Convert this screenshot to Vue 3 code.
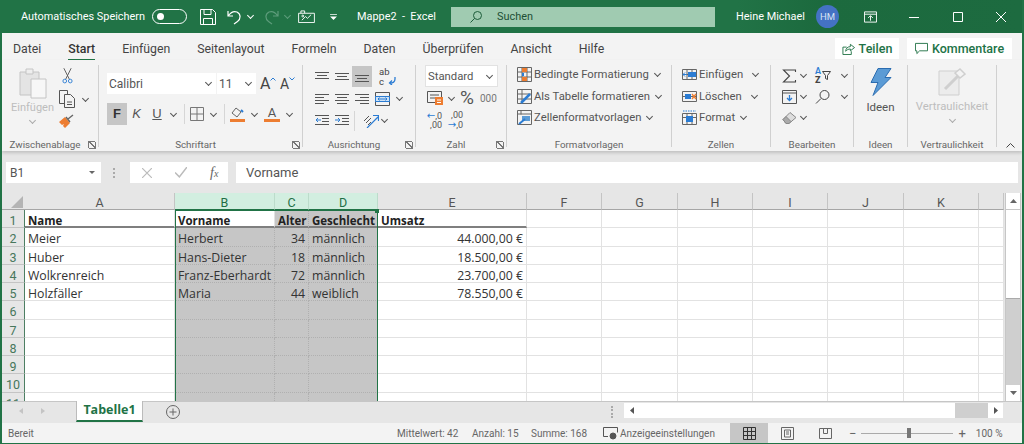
<script setup>
const tabs = ['Datei', 'Start', 'Einfügen', 'Seitenlayout', 'Formeln', 'Daten', 'Überprüfen', 'Ansicht', 'Hilfe']
const columns = ['A', 'B', 'C', 'D', 'E', 'F', 'G', 'H', 'I', 'J', 'K', '']
const selected = ['B', 'C', 'D']

const data = [
  ['Name', 'Vorname', 'Alter', 'Geschlecht', 'Umsatz'],
  ['Meier', 'Herbert', '34', 'männlich', '44.000,00 €'],
  ['Huber', 'Hans-Dieter', '18', 'männlich', '18.500,00 €'],
  ['Wolkrenreich', 'Franz-Eberhardt', '72', 'männlich', '23.700,00 €'],
  ['Holzfäller', 'Maria', '44', 'weiblich', '78.550,00 €'],
]
const rowNumbers = Array.from({ length: 11 }, (_, i) => i + 1)

function cellText(row, col) {
  return data[row - 1]?.[col] ?? ''
}

function cellClass(row, col) {
  const name = columns[col]
  return {
    'cell--sel': selected.includes(name) && !(row === 1 && name === 'B'),
    'cell--head': row === 1,
    'cell--line': row === 1 && col < 5,
    'cell--right': row > 1 && (name === 'C' || name === 'E'),
  }
}
</script>

<template>
  <div class="xl">
    <!-- Title bar -->
    <header class="title">
      <span class="title__auto">Automatisches Speichern</span>
      <span class="toggle"><i></i></span>
      <svg class="qa qa--save" viewBox="0 0 16 16" fill="none" stroke="#fff"><path d="M.5.500h12l3 3v12H.5zM4 .5v5h7v-5M3.500 15.500v-6h9v6" /></svg>
      <svg class="qa qa--undo" viewBox="0 0 16 16" fill="none" stroke="#fff" stroke-width="1.2"><path d="M1 2v5h5M1.500 6.500C4 3 7 1.800 10 3c4 2 4 7 .5 9.500L7 15" /></svg>
      <i class="chev chev--w"></i>
      <svg class="qa qa--redo" viewBox="0 0 16 16" fill="none" stroke="#5d9c7b" stroke-width="1.2"><path d="M15 2v5h-5M14.500 6.500C12 3 9 1.800 6 3c-4 2-4 7-.5 9.500L9 15" /></svg>
      <i class="chev chev--dim"></i>
      <svg class="qa qa--photo" viewBox="0 0 18 14" fill="none" stroke="#fff"><path d="M.5 3.500h17v10H.5zM3 3.500V1h4v2.500M4 11l4-4 2 2 4-4" /><circle cx="5" cy="6.500" r="1" /></svg>
      <svg class="qa qa--more" viewBox="0 0 8 7" fill="#fff"><path d="M0 0h8v1H0zM0 3h8L4 7z" /></svg>
      <span class="title__doc">Mappe2 &nbsp;-&nbsp; Excel</span>
      <div class="search">
        <svg viewBox="0 0 12 12" fill="none" stroke="#1d5c3a" stroke-width="1"><circle cx="7.500" cy="4.500" r="4" /><path d="M4.500 7.500L.5 11.500" /></svg>
        <span>Suchen</span>
      </div>
      <span class="title__user">Heine Michael</span>
      <span class="avatar">HM</span>
      <svg class="win win--display" viewBox="0 0 14 12" fill="none" stroke="#fff"><path d="M.5.500h13v11H.5zM.5 3h13M7 10V5M4.500 7L7 4.500 9.500 7" /></svg>
      <svg class="win win--min" viewBox="0 0 10 10" stroke="#fff"><path d="M0 5.500h10" /></svg>
      <svg class="win win--max" viewBox="0 0 10 10" fill="none" stroke="#fff"><path d="M.5.500h9v9h-9z" /></svg>
      <svg class="win win--close" viewBox="0 0 10 10" stroke="#fff"><path d="M0 0l10 10M10 0L0 10" /></svg>
    </header>

    <!-- Tabs -->
    <nav class="tabs">
      <span v-for="t in tabs" :key="t" class="tab" :class="{ 'tab--on': t === 'Start' }">{{ t }}</span>
      <span class="tabs__gap"></span>
      <button class="pill pill--share">
        <svg viewBox="0 0 14 14" fill="none" stroke="#217346"><path d="M5 5.500H1v8h9V10M4 10c0-3 2-5 5-5V2.500L13.500 6 9 9.500V7.500c-2 0-4 1-5 2.500z" /></svg>
        Teilen
      </button>
      <button class="pill pill--comment">
        <svg viewBox="0 0 14 14" fill="none" stroke="#217346"><path d="M.5 1.500h13v8H5l-3 3v-3H.5z" /></svg>
        Kommentare
      </button>
    </nav>

    <!-- Ribbon -->
    <section class="ribbon">
      <div class="group g-clip">
        <div class="group__body clip">
          <div class="clip__big">
            <svg viewBox="0 0 28 31" fill="none" stroke="#c4c4c4"><path fill="#e4e4e4" d="M1 4h19v23H1z" /><path fill="#eee" d="M7 1h7v5H7z" /><path fill="#f7f7f7" d="M12 11h15v19H12z" /></svg>
            <span>Einfügen</span>
            <i class="chev chev--off"></i>
          </div>
          <div class="clip__small">
            <svg class="ic-cut" viewBox="0 0 12 17" fill="none" stroke="#555"><path d="M2 0l6 12M10 0L4 12" /><circle cx="3" cy="14" r="2" stroke="#2b7cd3" /><circle cx="9" cy="14" r="2" stroke="#2b7cd3" /></svg>
            <div class="clip__copy">
              <svg viewBox="0 0 16 18" fill="none" stroke="#555"><path d="M.5.500h8v13h-8z" /><path fill="#f3f3f3" d="M5.500 4.500h6l4 4v9h-10z" /><path d="M8 12h5M8 14.500h5" /></svg>
              <i class="chev"></i>
            </div>
            <svg class="ic-brush" viewBox="0 0 16 14" fill="#ed7d31"><path d="M0 8l6-5 5 6-5 5-2-2 1-2-2 1z" /><path fill="none" stroke="#666" stroke-width="1.400" d="M9 5l5-4M7 3l4 5" /></svg>
          </div>
        </div>
        <div class="group__label"><span>Zwischenablage</span><i class="launch"></i></div>
      </div>

      <div class="group g-font">
        <div class="group__body font">
          <div class="font__top">
            <span class="combo combo--font">Calibri<i class="chev"></i></span>
            <span class="combo combo--size">11<i class="chev"></i></span>
            <span class="grow">A<svg viewBox="0 0 6 4" fill="none" stroke="#2b7cd3"><path d="M.5 3.500L3 1l2.500 2.500" /></svg></span>
            <span class="grow grow--down">A<svg viewBox="0 0 6 4" fill="none" stroke="#2b7cd3"><path d="M.5.500L3 3l2.500-2.500" /></svg></span>
          </div>
          <div class="font__tools">
            <b class="ftool ftool--on">F</b>
            <em class="ftool">K</em>
            <u class="ftool">U</u>
            <i class="chev"></i>
            <span class="vsep"></span>
            <svg viewBox="0 0 14 14" fill="none" stroke="#777"><path d="M.5.500h13v13H.5zM7 .5v13M.5 7h13" /></svg>
            <i class="chev"></i>
            <span class="vsep"></span>
            <span></span>
            <span class="swatch">
              <svg viewBox="0 0 15 11" fill="none" stroke="#666"><path d="M2 6l4-5 5 4-4 5z" /><path d="M11 3l2 2" stroke="#2b7cd3" stroke-width="2" /></svg>
              <i></i>
            </span>
            <i class="chev"></i>
            <span class="swatch swatch--text">A<i></i></span>
            <i class="chev"></i>
          </div>
        </div>
        <div class="group__label"><span>Schriftart</span><i class="launch"></i></div>
      </div>

      <div class="group g-align">
        <div class="group__body align">
          <div class="align__row">
            <span class="tool"><svg viewBox="0 0 14 12" stroke="#555"><path d="M0 1.500h14M2 4.500h10M0 7.500h14" /></svg></span>
            <span class="tool"><svg viewBox="0 0 14 12" stroke="#555"><path d="M0 2.500h14M2 5.500h10M0 8.500h14" /></svg></span>
            <span class="tool tool--on"><svg viewBox="0 0 14 12" stroke="#555"><path d="M0 4.500h14M2 7.500h10M0 10.500h14" /></svg></span>
            <span class="tool tool--abc"><span>ab<br />c</span><svg viewBox="0 0 8 8" fill="none" stroke="#2b7cd3" stroke-width="1.300"><path d="M7 0v2c0 3-2 4-5 4M4 3.500L1.500 6 4 8" /></svg></span>
          </div>
          <div class="align__row">
            <span class="tool"><svg viewBox="0 0 14 12" stroke="#555"><path d="M0 1.500h14M0 4.500h9M0 7.500h14M0 10.500h9" /></svg></span>
            <span class="tool"><svg viewBox="0 0 14 12" stroke="#555"><path d="M0 1.500h14M2 4.500h10M0 7.500h14M2 10.500h10" /></svg></span>
            <span class="tool"><svg viewBox="0 0 14 12" stroke="#555"><path d="M0 1.500h14M5 4.500h9M0 7.500h14M5 10.500h9" /></svg></span>
            <span class="tool"><svg class="ic-merge" viewBox="0 0 15 14" fill="none" stroke="#555"><path d="M.5.500h14v13H.5z" /><path fill="#cfe2f5" stroke="#2b7cd3" d="M.5 4.500h14v5H.5z" /><path stroke="#2b7cd3" d="M3 7h9M4.500 5.500L3 7l1.500 1.500M10.500 5.500L12 7l-1.500 1.500" /></svg></span>
            <i class="chev"></i>
          </div>
          <div class="align__row">
            <span class="tool"><svg viewBox="0 0 14 12" fill="none" stroke="#555"><path d="M0 .5h14M7 3.500h7M7 6.500h7M0 9.500h14" /><path stroke="#2b7cd3" d="M6 5H1M3 3L1 5l2 2" /></svg></span>
            <span class="tool"><svg viewBox="0 0 14 12" fill="none" stroke="#555"><path d="M0 .5h14M7 3.500h7M7 6.500h7M0 9.500h14" /><path stroke="#2b7cd3" d="M0 5h5M3 3l2 2-2 2" /></svg></span>
            <span class="vsep"></span>
            <span class="tool"><svg class="ic-orient" viewBox="0 0 16 15" fill="none" stroke="#555"><path d="M1 8l5-5M3 10l5-5M5 12l3-3" /><path stroke="#2b7cd3" stroke-width="1.200" d="M4 15L15 4M10 2.500h5.500V8" /></svg></span>
            <i class="chev"></i>
          </div>
        </div>
        <div class="group__label"><span>Ausrichtung</span><i class="launch"></i></div>
      </div>

      <div class="group g-num">
        <div class="group__body num">
          <span class="combo combo--num">Standard<i class="chev"></i></span>
          <div class="num__row">
            <svg class="ic-money" viewBox="0 0 16 15" fill="none" stroke="#555"><path d="M.5.500h14v11H.5zM3 4h9M3 7h5" /><path fill="#ed7d31" stroke="none" d="M8 6h8v8H8z" /><path stroke="#fff" d="M10 9h4M10 11.500h4" /></svg>
            <i class="chev"></i>
            <span class="num__pct">%</span>
            <span class="num__000">000</span>
          </div>
          <div class="num__row num__row--dec">
            <span class="dec"><span><b>←</b>,0</span><span>,00</span></span>
            <span class="dec"><span>,00</span><span><b>→</b>,0</span></span>
          </div>
        </div>
        <div class="group__label"><span>Zahl</span><i class="launch"></i></div>
      </div>

      <div class="group g-style">
        <div class="group__body list">
          <div class="list__item">
            <svg viewBox="0 0 15 15" fill="none" stroke="#666"><path d="M.5.500h14v14H.5zM5 .5v14M10 .5v14M.5 5h14M.5 10h14" /><path fill="#ed7d31" stroke="none" d="M5 1h5v4H5zM5 10h5v4H5z" /><path fill="#2b7cd3" stroke="none" d="M5 6h2v3H5z" /></svg>
            <span>Bedingte Formatierung</span><i class="chev"></i>
          </div>
          <div class="list__item">
            <svg viewBox="0 0 15 15" fill="none" stroke="#666"><path d="M.5.500h14v14H.5zM.5 5h14M.5 10h14M5 .5v14" /><path stroke="#2b7cd3" stroke-width="2.500" d="M4 14l9-9" /></svg>
            <span>Als Tabelle formatieren</span><i class="chev"></i>
          </div>
          <div class="list__item">
            <svg viewBox="0 0 15 15" fill="none" stroke="#666"><path d="M.5.500h14v14H.5zM.5 4h14M4 .5v4" /><path fill="#5b9bd5" stroke="none" d="M5 6h8v5H5z" /><path stroke="#2b7cd3" stroke-width="2" d="M2 14l6-5" /></svg>
            <span>Zellenformatvorlagen</span><i class="chev"></i>
          </div>
        </div>
        <div class="group__label"><span>Formatvorlagen</span></div>
      </div>

      <div class="group g-cells">
        <div class="group__body list">
          <div class="list__item list__item--ins">
            <svg viewBox="0 0 15 15" fill="none" stroke="#666"><path d="M.5 2.500h14v10H.5zM5 2.500v10M10 2.500v10M.5 7.500h14" /><path fill="#2b7cd3" stroke="none" d="M6 5h8v5H6z" /><path stroke="#2b7cd3" d="M5 7.500H1M3 5.500l-2 2 2 2" /></svg>
            <span>Einfügen</span><i class="chev"></i>
          </div>
          <div class="list__item list__item--del">
            <svg viewBox="0 0 15 15" fill="none" stroke="#666"><path d="M.5 2.500h14v10H.5zM.5 7.500h14" /><path fill="#2b7cd3" stroke="none" d="M3 5h6v5H3z" /><path stroke="#ed7d31" stroke-width="1.300" d="M10 5l4 5M14 5l-4 5" /></svg>
            <span>Löschen</span><i class="chev"></i>
          </div>
          <div class="list__item list__item--fmt">
            <svg viewBox="0 0 15 15" fill="none" stroke="#666"><path d="M.5 3.500h14v11H.5zM5 3.500v11M10 3.500v11M.5 7.500h14" /><path fill="#2b7cd3" stroke="none" d="M4 6h7v6H4z" /><path stroke="#2b7cd3" stroke-dasharray="1.500 1" d="M1 1h13" /></svg>
            <span>Format</span><i class="chev"></i>
          </div>
        </div>
        <div class="group__label"><span>Zellen</span></div>
      </div>

      <div class="group g-edit">
        <div class="group__body edit">
          <svg viewBox="0 0 14 14" fill="none" stroke="#444" stroke-width="1.100"><path d="M13 3V1H1l6 6-6 6h12v-2" /></svg>
          <i class="chev"></i>
          <span class="edit__sort">
            <span>A<br /><b>Z</b></span>
            <svg viewBox="0 0 9 9" fill="none" stroke="#444"><path d="M.5.500h8L5.500 4.500v4l-2-1v-3z" /></svg>
          </span>
          <i class="chev"></i>
          <svg viewBox="0 0 15 14" fill="none" stroke="#555"><path d="M.5.500h14v13H.5zM.5 3h14" /><path stroke="#2b7cd3" stroke-width="1.300" d="M7.500 5v5M5 8l2.500 2.500L10 8" /></svg>
          <i class="chev"></i>
          <svg viewBox="0 0 14 14" fill="none" stroke="#444"><circle cx="9" cy="5" r="4.500" /><path d="M5.500 8.500L.5 13.500" /></svg>
          <i class="chev"></i>
          <svg viewBox="0 0 15 13" fill="#ddd" stroke="#888"><path d="M1 8l7-7 6 5-7 6H4z" /><path fill="#aaa" d="M1 8l3-3 5 5-2 2H4z" /></svg>
          <i class="chev"></i>
        </div>
        <div class="group__label"><span>Bearbeiten</span></div>
      </div>

      <div class="group g-ideas">
        <div class="group__body big">
          <svg viewBox="0 0 22 28" fill="#5b9bd5" stroke="#2b6cb0" stroke-linejoin="round"><path d="M8 .5h13l-6 9h6L3 27.500l5-13H1z" /></svg>
          <span>Ideen</span>
        </div>
        <div class="group__label"><span>Ideen</span></div>
      </div>

      <div class="group g-conf">
        <div class="group__body big big--off">
          <svg viewBox="0 0 28 28" fill="none" stroke="#cfcfcf"><path fill="#ececec" d="M1 3h20v24H1z" /><path stroke-width="3" d="M7 21L20 8" /><path fill="#f3f3f3" stroke-width="1.500" d="M17 5l5-4 5 5-5 4z" /></svg>
          <span>Vertraulichkeit</span>
          <i class="chev chev--off"></i>
        </div>
        <div class="group__label"><span>Vertraulichkeit</span></div>
      </div>

      <svg class="collapse" viewBox="0 0 9 5" fill="none" stroke="#444"><path d="M.5 4.500l4-4 4 4" /></svg>
    </section>

    <!-- Formula bar -->
    <section class="formula">
      <div class="namebox"><span>B1</span><svg viewBox="0 0 6 3" fill="#666"><path d="M0 0h6L3 3z" /></svg></div>
      <span class="grip"></span>
      <div class="fxbox">
        <svg viewBox="0 0 10 10" stroke="#bbb" stroke-width="1.200"><path d="M0 0l10 10M10 0L0 10" /></svg>
        <svg viewBox="0 0 11 10" fill="none" stroke="#bbb" stroke-width="1.400"><path d="M0 5l4 4 7-9" /></svg>
        <em>f<small>x</small></em>
      </div>
      <div class="input">Vorname</div>
    </section>

    <!-- Sheet -->
    <section class="sheet">
      <div class="grid">
        <div class="corner"><svg viewBox="0 0 12 12" fill="#b4b4b4"><path d="M12 0v12H0z" /></svg></div>
        <div v-for="c in columns" :key="c" class="colhead" :class="{ 'colhead--sel': selected.includes(c) }">{{ c }}</div>
        <template v-for="r in rowNumbers" :key="r">
          <div class="rowhead">{{ r }}</div>
          <div v-for="(c, i) in columns" :key="c" class="cell" :class="cellClass(r, i)">{{ cellText(r, i) }}</div>
        </template>
        <div class="selection"><i></i></div>
      </div>
      <div class="vscroll">
        <span class="sbtn"><svg viewBox="0 0 7 4" fill="#666"><path d="M3.500 0L7 4H0z" /></svg></span>
        <span class="vscroll__thumb"></span>
        <span class="vscroll__track"></span>
        <span class="sbtn"><svg viewBox="0 0 7 4" fill="#666"><path d="M0 0h7L3.500 4z" /></svg></span>
      </div>
    </section>

    <!-- Sheet tabs -->
    <section class="sheets">
      <svg class="nav" viewBox="0 0 4 6" fill="#c4c4c4"><path d="M4 0v6L0 3z" /></svg>
      <svg class="nav" viewBox="0 0 4 6" fill="#c4c4c4"><path d="M0 0v6l4-3z" /></svg>
      <span class="sheet-tab">Tabelle1</span>
      <svg class="plus" viewBox="0 0 14 14" fill="none" stroke="#666"><circle cx="7" cy="7" r="6.500" /><path d="M3.500 7h7M7 3.500v7" /></svg>
      <span class="grip grip--sheets"></span>
      <div class="hscroll">
        <span class="hbtn"><svg viewBox="0 0 4 7" fill="#555"><path d="M4 0v7L0 3.500z" /></svg></span>
        <span class="hscroll__thumb"></span>
        <span class="hscroll__track"></span>
        <span class="hbtn"><svg viewBox="0 0 4 7" fill="#555"><path d="M0 0v7l4-3.500z" /></svg></span>
      </div>
    </section>

    <!-- Status bar -->
    <footer class="status">
      <span class="status__ready">Bereit</span>
      <span class="status__stat">Mittelwert: 42</span>
      <span class="status__stat">Anzahl: 15</span>
      <span class="status__stat">Summe: 168</span>
      <span class="status__disp">
        <svg viewBox="0 0 15 13" fill="none" stroke="#555"><path d="M5 9.500H.5v-9h14v5" /><circle cx="10" cy="9" r="3" fill="#555" /></svg>
        Anzeigeeinstellungen
      </span>
      <span class="view view--on"><svg viewBox="0 0 13 13" fill="none" stroke="#333"><path d="M.5.500h12v12H.5zM4.500.5v12M8.500.5v12M.5 4.500h12M.5 8.500h12" /></svg></span>
      <span class="view"><svg viewBox="0 0 13 13" fill="none" stroke="#666"><path d="M.5.500h12v12H.5zM3.500 3h6v7h-6zM5 5h3M5 7h3" /></svg></span>
      <span class="view"><svg viewBox="0 0 13 11" fill="none" stroke="#666"><path d="M.5.500h12v10H.5zM4.500.5v5h4v-5" /></svg></span>
      <span class="zoom">
        <span>−</span>
        <span class="zoom__bar"><i></i></span>
        <span>+</span>
      </span>
      <span class="status__pct">100 %</span>
    </footer>
  </div>
</template>

<style>
html, body { margin: 0; background: #217346; }
</style>

<style scoped>
.xl {
  width: 1024px; height: 444px; box-sizing: border-box; overflow: hidden;
  border: solid #217346; border-width: 0 2px 1px 2px;
  display: flex; flex-direction: column;
  background: #e6e6e6; color: #444;
  font-family: Roboto, "Liberation Sans", sans-serif;
}
svg { display: block; flex-shrink: 0; }
i { font-style: normal; }

/* Chevrons */
.chev {
  display: block; width: 4px; height: 4px; margin: 0 auto;
  border: solid #555; border-width: 0 1px 1px 0;
  transform: translateY(-1px) rotate(45deg);
}
.chev--off { border-color: #aaa; }
.chev--w { border-color: #fff; margin: 0 0 0 5px; }
.chev--dim { border-color: #5d9c7b; margin: 0 0 0 6px; }

/* Title bar */
.title {
  height: 33px; flex-shrink: 0; margin: 0 -2px;
  display: flex; align-items: center;
  background: linear-gradient(90deg, #217346 0, #217346 72%, #1c6a3e 80%, #1d6b40 100%);
  color: #fff; font-size: 10.900px;
}
.title__auto { margin-left: 21px; width: 131px; white-space: nowrap; }
.toggle {
  width: 35px; height: 15px; box-sizing: border-box; border: 1px solid #fff; border-radius: 8px;
  display: flex; align-items: center; padding-left: 4px;
}
.toggle i { width: 7px; height: 7px; border-radius: 50%; background: #fff; }
.qa--save { width: 16px; height: 16px; margin-left: 13px; }
.qa--undo { width: 16px; height: 16px; margin-left: 11px; }
.qa--redo { width: 16px; height: 16px; margin-left: 10px; }
.qa--photo { width: 17px; height: 13px; margin-left: 8px; }
.qa--more { width: 7px; height: 6px; margin-left: 15px; }
.title__doc { margin-left: 20px; width: 94px; white-space: nowrap; }
.search {
  width: 264px; height: 20px; display: flex; align-items: center;
  background: #a0cbb1; color: #1e4f35;
}
.search svg { width: 12px; height: 12px; margin-left: 19px; }
.search span { margin-left: 15px; }
.title__user { margin-left: 21px; width: 80px; white-space: nowrap; }
.avatar {
  width: 23px; height: 23px; border-radius: 50%; background: #4472c4;
  display: flex; align-items: center; justify-content: center; font-size: 9.500px; color: #d8e2f3;
}
.win--display { width: 13px; height: 12px; margin-left: 25px; }
.win--min { width: 10px; height: 10px; margin-left: 32px; }
.win--max { width: 10px; height: 10px; margin-left: 34px; }
.win--close { width: 10px; height: 10px; margin-left: 33px; }

/* Tabs */
.tabs {
  height: 27px; flex-shrink: 0; display: flex; align-items: center; gap: 27px;
  background: #f3f3f3; padding: 0 11px; font-size: 12.300px;
}
.tab { position: relative; line-height: 24px; margin-top: 4px; white-space: nowrap; }
.tab--on { font-weight: 500; color: #333; }
.tab--on::after {
  content: ""; position: absolute; left: 0; right: 0; bottom: 0; height: 2px; background: #217346;
}
.tabs__gap { flex: 1; margin-right: -27px; }
.pill {
  height: 21px; margin-top: 4px; padding: 0; border: none; background: #fff;
  display: flex; align-items: center; justify-content: center; gap: 4px;
  font: 500 12.500px Roboto, sans-serif; color: #217346;
}
.pill svg { width: 13px; height: 13px; }
.pill--share { width: 64px; margin-right: -19px; }
.pill--comment { width: 105px; margin-right: -1px; }

/* Ribbon */
.ribbon {
  height: 91px; flex-shrink: 0; display: flex; align-items: flex-start;
  background: #f3f3f3; padding-top: 5px; box-sizing: border-box;
  box-shadow: 0 2px 3px rgba(0, 0, 0, .16); position: relative; font-size: 11.500px;
}
.group {
  height: 82px; box-sizing: border-box; border-right: 1px solid #d0d0d0;
  display: flex; flex-direction: column;
}
.group__body { flex: 1; min-height: 0; }
.group__label {
  height: 12px; display: flex; align-items: center; font-size: 9.800px; color: #666;
  margin-bottom: -3px; white-space: nowrap;
}
.group__label span { flex: 1; text-align: center; }
.launch {
  width: 7px; height: 7px; margin-right: 3px; box-sizing: border-box;
  border: solid #777; border-width: 1px 0 0 1px; position: relative;
  background: linear-gradient(45deg, transparent 46%, #777 46%, #777 60%, transparent 60%);
  box-shadow: 1px 1px 0 #777;
}
.g-clip { width: 97px; }
.g-font { width: 204px; }
.g-align { width: 113px; }
.g-num { width: 91px; }
.g-style { width: 165px; }
.g-cells { width: 99px; }
.g-edit { width: 83px; }
.g-ideas { width: 54px; }
.g-conf { width: 89px; }

/* Clipboard */
.clip { display: flex; padding-top: 3px; }
.clip__big {
  width: 61px; display: flex; flex-direction: column; align-items: center; color: #bdbdbd;
  font-size: 11px;
}
.clip__big svg { width: 28px; height: 31px; }
.clip__big span { line-height: 18px; }
.clip__big .chev { margin-top: 2px; }
.clip__small { display: flex; flex-direction: column; align-items: flex-start; margin-left: -4px; }
.ic-cut { width: 11px; height: 16px; margin-left: 3px; }
.clip__copy { display: flex; align-items: center; margin-top: 6px; gap: 3px; }
.clip__copy svg { width: 16px; height: 18px; }
.clip__copy .chev { margin-left: 5px; }
.ic-brush { width: 16px; height: 14px; margin-top: 6px; }

/* Font */
.font { padding: 8px 0 0 8px; }
.font__top { display: flex; align-items: center; }
.combo {
  height: 21px; box-sizing: border-box; background: #fff; display: flex; align-items: center;
  padding: 0 5px 0 2px; font-size: 12px; color: #555;
}
.combo .chev { margin-right: 0; margin-left: auto; }
.combo--font { width: 109px; margin-right: 1px; }
.combo--size { width: 39px; }
.grow { position: relative; display: flex; width: 21px; margin-left: 4px; font-size: 16px; color: #444; line-height: 18px; }
.grow svg { width: 6px; height: 4px; margin-top: 2px; }
.grow--down { font-size: 14px; margin-left: -1px; }
.font__tools {
  margin-top: 9px; height: 22px;
  display: grid; grid-template-columns: 20px 19px 22px 10px 12px 14px 18px 4px 4px 15px 18px 18px 16px;
  place-items: center; font-size: 13px;
}
.font__tools svg { width: 14px; height: 14px; }
.ftool { font-family: "Liberation Sans", sans-serif; color: #555; line-height: 22px; }
.ftool--on { width: 20px; text-align: center; background: #c6c6c6; color: #333; }
.vsep { width: 1px; height: 20px; background: #d6d6d6; }
.swatch { display: flex; flex-direction: column; align-items: center; width: 15px; }
.swatch svg { width: 15px; height: 11px; }
.swatch i { width: 15px; height: 3px; background: #ed7d31; margin-top: 1px; }
.swatch--text { font-size: 13px; line-height: 13px; color: #555; width: 16px; }
.swatch--text i { width: 16px; margin-top: 0; }

/* Alignment */
.align { padding: 1px 0 0 9px; display: flex; flex-direction: column; gap: 1px; }
.align__row { height: 21px; display: flex; align-items: center; }
.tool { width: 20px; height: 21px; display: flex; align-items: center; justify-content: center; }
.tool svg { width: 14px; height: 12px; }
.tool--on { background: #c6c6c6; }
.tool--abc { margin-left: 3px; font-size: 9.500px; line-height: 10px; justify-content: flex-start; padding-left: 4px; box-sizing: border-box; }
.tool--abc svg { width: 8px; height: 8px; margin: 8px 0 0 -2px; }
.tool .ic-merge { width: 15px; height: 14px; }
.tool .ic-orient { width: 16px; height: 15px; margin-left: 8px; }
.align__row > .chev { margin: 0 0 0 5px; }
.align__row .vsep { margin: 0 2px; }

/* Number */
.num { padding: 0 0 0 9px; }
.combo--num { width: 73px; height: 22px; border: 1px solid #e2e2e2; padding-left: 2px; font-size: 11.300px; }
.num__row { height: 22px; display: flex; align-items: center; padding-left: 2px; }
.ic-money { width: 16px; height: 15px; }
.num__row > .chev { margin: 0 0 0 6px; }
.num__pct { font-size: 19px; margin-left: 6px; line-height: 20px; color: #555; width: 20px; }
.num__000 { font-size: 10px; color: #777; }
.num__row--dec { gap: 6px; }
.dec { display: flex; flex-direction: column; align-items: flex-end; font-size: 9px; line-height: 9px; color: #555; width: 15px; }
.dec b { color: #2b7cd3; font-size: 10px; font-weight: 400; font-family: "DejaVu Sans", sans-serif; }

/* Lists */
.list { margin-top: -1px; padding: 0 0 0 10px; display: flex; flex-direction: column; }
.list__item { height: 21.500px; flex-shrink: 0; display: flex; align-items: center; font-size: 11.300px; color: #555; white-space: nowrap; }
.list__item svg { width: 15px; height: 15px; margin-right: 2px; }
.list__item .chev { margin: 0 0 0 6px; }
.list__item--ins .chev { margin-left: 10px; }
.list__item--del .chev { margin-left: 10px; }

/* Editing */
.edit {
  padding: 0 0 0 11px;
  display: grid; grid-template-columns: 15px 18px 23px 11px; grid-auto-rows: 21px;
  align-items: center; justify-items: start; column-gap: 0;
}
.edit svg { width: 15px; height: 14px; }
.edit .chev { margin: 0 0 0 4px; }
.edit__sort { display: flex; align-items: center; font-size: 9px; line-height: 9px; font-weight: 600; color: #2b7cd3; }
.edit__sort b { color: #444; }
.edit__sort svg { width: 9px; height: 9px; margin-left: 1px; }
.edit > svg:nth-of-type(4) { grid-column: 1; }

/* Large buttons */
.big { display: flex; flex-direction: column; align-items: center; padding-top: 3px; color: #555; }
.big svg { width: 22px; height: 28px; }
.big span { margin-top: 2px; line-height: 18px; font-size: 11.500px; }
.big--off { color: #bdbdbd; }
.big--off svg { width: 28px; height: 28px; }
.big--off span { font-size: 11.300px; white-space: nowrap; }
.big--off .chev { margin-top: 2px; }
.collapse { width: 9px; height: 5px; margin: 78px 0 0 9px; }

/* Formula bar */
.formula {
  height: 42px; flex-shrink: 0; box-sizing: border-box; padding: 11px 0 0 4px; display: flex; align-items: flex-start;
}
.namebox {
  width: 95px; height: 21px; background: #fff; display: flex; align-items: center; justify-content: space-between;
  padding: 0 6px 0 4px; box-sizing: border-box; font-size: 12px; color: #555;
}
.namebox svg { width: 6px; height: 3px; }
.grip { width: 2px; height: 10px; margin: 6px 15px 0 12px; border-left: 2px dotted #aaa; box-sizing: border-box; }
.fxbox {
  width: 98px; height: 21px; background: #fff; display: flex; align-items: center; box-sizing: border-box; padding-left: 12px;
}
.fxbox svg:nth-child(1) { width: 10px; height: 10px; }
.fxbox svg:nth-child(2) { width: 12px; height: 11px; margin-left: 23px; }
.fxbox em { margin-left: 23px; font: italic 14px "Liberation Serif", serif; color: #666; }
.fxbox small { font-size: 10px; }
.input {
  width: 782px; height: 21px; margin-left: 8px; background: #fff; line-height: 21px; padding-left: 10px; box-sizing: border-box;
  font-size: 13px; color: #555;
}

/* Sheet */
.sheet { height: 208px; flex-shrink: 0; display: flex; overflow: hidden; }
.grid {
  width: 1002px; height: 208px; flex-shrink: 0; position: relative; overflow: hidden;
  display: grid; grid-template-columns: 23px 150px 100px 34px 69px 149px 75px 76px 75px 75px 76px 75px 25px;
  grid-template-rows: 17px; grid-auto-rows: 18.250px;
  background: #fff;
}
.corner {
  background: #e6e6e6; display: flex; align-items: flex-end; justify-content: flex-end; padding: 0 2px 1px 0;
  border-bottom: 1px solid #a6a6a6; box-sizing: border-box;
}
.corner svg { width: 12px; height: 12px; }
.colhead {
  background: #e6e6e6; border-right: 1px solid #c4c4c4; border-bottom: 1px solid #a6a6a6; box-sizing: border-box;
  text-align: center; font-size: 12.500px; line-height: 19px; color: #555;
}
.colhead--sel { background: #d2eee0; color: #1f6e45; border-bottom-color: #217346; border-right-color: #bcdccb; }
.rowhead {
  background: #e6e6e6; border-right: 1px solid #4d7f63; border-bottom: 1px solid #c4c4c4; box-sizing: border-box;
  text-align: center; font-size: 12.500px; line-height: 21px; color: #47775c;
}
.cell {
  border-right: 1px solid #e2e2e2; border-bottom: 1px solid #e2e2e2; box-sizing: border-box;
  padding: 1px 3px 0; font-family: "Open Sans", sans-serif; font-size: 12.300px; line-height: 19px; color: #333; white-space: nowrap; overflow: hidden;
}
.cell--sel { background: #c6c6c6; border-right: 1px dotted #b0b0b0; border-bottom: 1px dotted #b0b0b0; }
.cell--head { font-weight: 700; font-size: 11.500px; color: #222; }
.cell--line { border-bottom: 2px solid #7f7f7f; }
.cell--right { text-align: right; }
.selection {
  position: absolute; left: 173px; top: 17px; width: 203px; height: 200px; box-sizing: border-box;
  border: 1px solid #217346; pointer-events: none;
}
.selection i {
  position: absolute; right: -2px; top: -2px; width: 4px; height: 4px; background: #217346;
}
.vscroll {
  width: 16px; margin-left: 1px; display: flex; flex-direction: column; background: #cfcfcf;
  border: 1px solid #c6c6c6; border-width: 0 1px; box-sizing: border-box;
}
.sbtn { height: 16px; background: #fff; display: flex; align-items: center; justify-content: center; flex-shrink: 0; }
.sbtn svg { width: 7px; height: 4px; }
.vscroll__thumb { height: 88px; background: #fff; border-top: 1px solid #c6c6c6; border-bottom: 1px solid #aaa; flex-shrink: 0; }
.vscroll__track { flex: 1; }

/* Sheet tabs */
.sheets {
  height: 22px; flex-shrink: 0; display: flex; align-items: flex-start; background: #e6e6e6;
  border-top: 1px solid #c6c6c6; box-sizing: border-box; position: relative;
}
.nav { width: 4px; height: 6px; margin: 6px 0 0 17px; }
.nav + .nav { margin-left: 18px; }
.sheet-tab {
  width: 65px; height: 19px; margin: -1px 0 0 31px; background: #fff; text-align: center;
  font-family: "Open Sans", sans-serif; font-size: 12.500px; font-weight: 700; line-height: 18px; color: #217346;
  border-bottom: 2px solid #217346; border-left: 1px solid #bbb; border-right: 1px solid #bbb; box-sizing: content-box;
}
.plus { width: 14px; height: 14px; margin: 3px 0 0 23px; }
.grip--sheets { height: 12px; margin: 4px 0 0 431px; }
.hscroll { width: 379px; height: 15px; margin: 1px 0 0 11px; display: flex; background: #cfcfcf; }
.hbtn { width: 15px; background: #fff; display: flex; align-items: center; justify-content: center; flex-shrink: 0; }
.hbtn svg { width: 4px; height: 7px; }
.hscroll__thumb { width: 316px; background: #fff; flex-shrink: 0; }
.hscroll__track { flex: 1; }

/* Status bar */
.status {
  height: 20px; flex-shrink: 0; display: flex; align-items: center; background: #f3f3f3;
  font-size: 10px; color: #666; white-space: nowrap;
}
.status__ready { margin-left: 6px; width: 389px; }
.status__stat { width: 75px; }
.status__stat:nth-child(3) { width: 59px; }
.status__stat:nth-child(4) { width: 72px; }
.status__disp { display: flex; align-items: center; gap: 2px; width: 127px; }
.status__disp svg { width: 15px; height: 13px; }
.view { width: 38px; height: 20px; display: flex; align-items: center; justify-content: center; }
.view svg { width: 13px; height: 13px; }
.view--on { background: #c6c6c6; }
.zoom { display: flex; align-items: center; gap: 5px; margin-left: 5px; font-size: 13px; }
.zoom__bar { width: 92px; height: 1px; background: #aaa; position: relative; }
.zoom__bar i { position: absolute; left: 46px; top: -5px; width: 4px; height: 10px; background: #777; }
.status__pct { margin-left: 10px; }
</style>
